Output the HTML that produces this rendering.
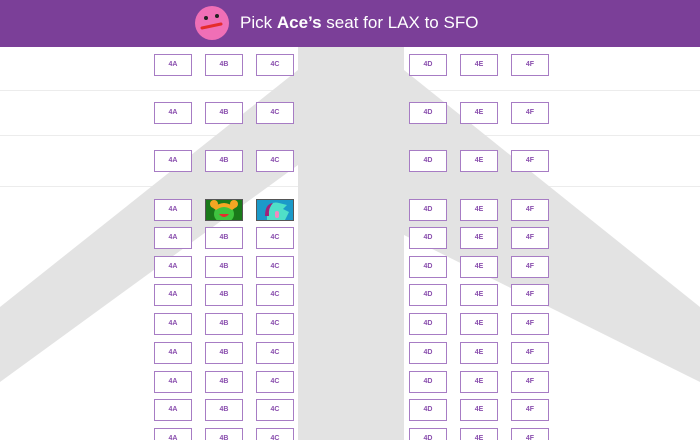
<!DOCTYPE html>
<html style="width:700px;height:440px;overflow:hidden"><head><style>
*{margin:0;padding:0;box-sizing:border-box}
html,body{width:700px;height:440px;overflow:hidden}
body{background:#fff;font-family:"Liberation Sans",sans-serif;position:relative}
.hdr{position:absolute;left:0;top:0;width:700px;height:47px;background:#7b3f98;z-index:5}
.hdr .t{position:absolute;left:240px;top:13px;color:#fff;font-size:17px;font-weight:normal}
.s{position:absolute;width:38px;height:22px;border:1.5px solid #a77cc4;background:#fff;color:#8a4fae;font-size:7px;font-weight:bold;text-align:center;line-height:20px;z-index:3}
.ln{position:absolute;left:0;width:700px;height:1px;background:#ececec}
</style></head><body>
<div class="ln" style="top:90px"></div>
<div class="ln" style="top:135px"></div>
<div class="ln" style="top:186px"></div>
<svg style="position:absolute;left:0;top:0;z-index:1" width="700" height="440">
<polygon fill="#e3e3e3" points="298,47 404,47 404,70 700,307 700,382 404,235 404,440 298,440 298,165 0,382 0,307 298,70"/>
<rect x="294" y="235" width="4" height="205" fill="#fff"/>
</svg>
<div class="hdr">
<svg style="position:absolute;left:194px;top:5px" width="36" height="36">
<circle cx="18" cy="18" r="17" fill="#f06fb6"/>
<circle cx="12" cy="13" r="2" fill="#222"/><circle cx="23" cy="11" r="2" fill="#222"/>
<path d="M8 23 L27 19" stroke="#e52c2c" stroke-width="3" stroke-linecap="round"/>
</svg>
<div class="t">Pick <b>Ace’s</b> seat for LAX to SFO</div>
</div>
<div id="seats"></div>
<script>
var ys=[54,102,150,199,227,256,284,313,342,371,399,428];
var xs=[154,205,256,409,460,511];var L=['4A','4B','4C','4D','4E','4F'];
var h='';
ys.forEach(function(y,r){xs.forEach(function(x,i){
 if(r==3&&i==1){h+='<div class="s" style="left:'+x+'px;top:'+y+'px;background:#1a7a1a;border-color:#555;overflow:hidden"><svg width="36" height="20" style="position:absolute;left:0;top:0"><circle cx="8" cy="4" r="4" fill="#f5a623"/><circle cx="28" cy="4" r="4" fill="#f5a623"/><ellipse cx="18" cy="14" rx="10" ry="9" fill="#3fc43f"/><path d="M7 8 Q18 -2 29 8 L26 10 Q18 4 10 10Z" fill="#f5a623"/><path d="M13 14 Q18 20 23 14Z" fill="#e52c2c"/></svg></div>';return;}
 if(r==3&&i==2){h+='<div class="s" style="left:'+x+'px;top:'+y+'px;background:#1b9ac9;border-color:#555;overflow:hidden"><svg width="36" height="20" style="position:absolute;left:0;top:0"><path d="M10 20 L10 8 Q14 1 22 3 L30 5 L26 9 L32 12 L28 20Z" fill="#4fe0c8"/><path d="M8 16 Q8 4 16 3 Q11 8 12 16Z" fill="#a0207a"/><rect x="18" y="11" width="4" height="7" rx="2" fill="#f08ac0"/></svg></div>';return;}
 h+='<div class="s" style="left:'+x+'px;top:'+y+'px">'+L[i]+'</div>';
});});
document.getElementById('seats').innerHTML=h;
</script>
</body></html>
